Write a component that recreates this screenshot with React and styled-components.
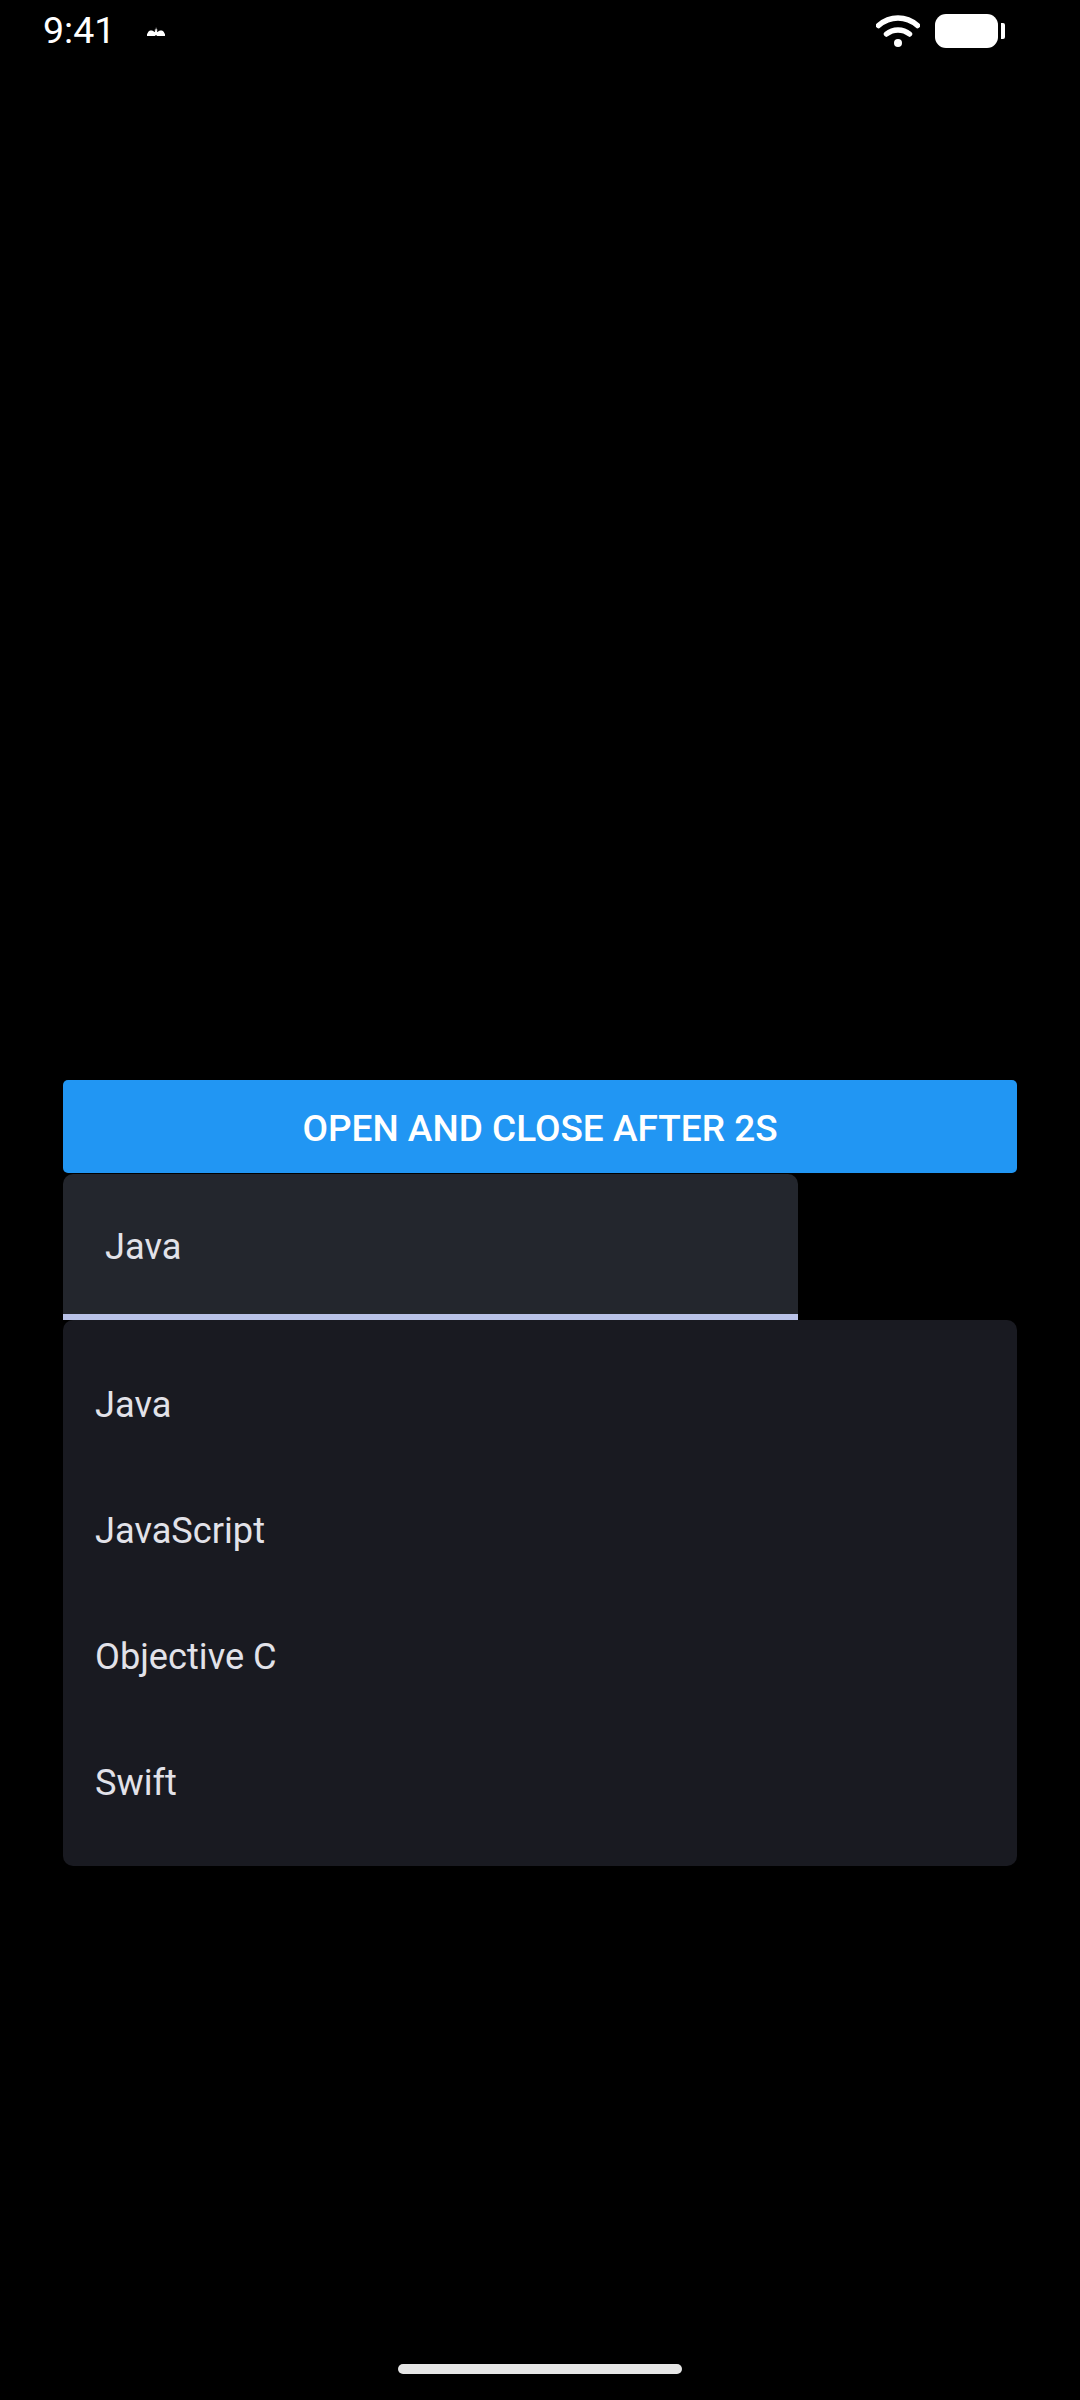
import React from "react";
import styled, { createGlobalStyle } from "styled-components";

const GlobalStyle = createGlobalStyle`
  html, body {
    margin: 0;
    padding: 0;
    background: #000;
  }
  body {
    font-family: Roboto, "Liberation Sans", sans-serif;
  }
`;

const languages = ["Java", "JavaScript", "Objective C", "Swift"];

const App = () => {
  return (
    <>
      <GlobalStyle />
      <Screen>
        <StatusBar>
          <Clock>9:41</Clock>
          <NotifyIcon viewBox="0 0 18 9">
            <path d="M0 9V7.2L1.2 5C2.4 3.4 4.6 3.2 6 4L7.8 5 8.4 3.4 7.2 3 8.7 2.4 9 0 9.6 2.4 11 3 9.7 3.4 10.2 5 12 4C13.6 3.2 15.6 3.4 16.8 5L18 7.2V9H10.2L9 7.9 7.8 9Z" fill="#fff" />
          </NotifyIcon>
          <StatusRight>
            <WifiIcon viewBox="0 0 44 32">
              <path d="M2.5 10.5C14 .5 30 .5 41.5 10.5" />
              <path d="M10.5 19C17 13.6 27 13.6 33.5 19" />
              <circle cx="22" cy="28" r="4" />
            </WifiIcon>
            <Battery />
          </StatusRight>
        </StatusBar>
        <Content>
          <OpenButton>Open and close after 2s</OpenButton>
          <Field>Java</Field>
          <Menu>
            {languages.map((name) => (
              <MenuItem key={name}>{name}</MenuItem>
            ))}
          </Menu>
        </Content>
        <HomeBar />
      </Screen>
    </>
  );
};

const Screen = styled.div`
  width: 1080px;
  height: 2400px;
  background: #000;
  display: flex;
  flex-direction: column;
  overflow: hidden;
`;

const StatusBar = styled.div`
  height: 60px;
  flex: none;
  display: flex;
  align-items: center;
  padding: 0 75px 0 43px;
`;

const Clock = styled.div`
  font-size: 37.5px;
  line-height: 60px;
  color: #fff;
`;

const NotifyIcon = styled.svg`
  width: 18px;
  height: 9px;
  margin: 3px 0 0 32px;
`;

const StatusRight = styled.div`
  margin: 2px 0 0 auto;
  display: flex;
  align-items: center;
  gap: 15px;
`;

const WifiIcon = styled.svg`
  width: 44px;
  height: 32px;
  fill: #fff;
  path {
    fill: none;
    stroke: #fff;
    stroke-width: 5.5;
    stroke-linecap: round;
  }
`;

const Battery = styled.div`
  position: relative;
  width: 63px;
  height: 34px;
  border-radius: 11px;
  background: #fff;
  margin-right: 7px;
  &::after {
    content: "";
    position: absolute;
    left: 66px;
    top: 9px;
    width: 4px;
    height: 16px;
    border-radius: 0 2px 2px 0;
    background: #fff;
  }
`;

const Content = styled.div`
  padding: 1020px 63px 0;
  display: flex;
  flex-direction: column;
`;

const OpenButton = styled.button`
  height: 93px;
  border: 0;
  padding: 3px 0 0;
  border-radius: 5px;
  background: #2196f3;
  color: #fff;
  font-family: Roboto, "Liberation Sans", sans-serif;
  font-size: 37px;
  font-weight: 500;
  text-transform: uppercase;
`;

const Field = styled.div`
  width: 735px;
  height: 146px;
  margin-top: 1px;
  padding: 4px 0 0 42px;
  box-sizing: border-box;
  display: flex;
  align-items: center;
  background: #23262d;
  border-bottom: 6px solid #b9c2e8;
  border-radius: 10px 10px 0 0;
  color: #e2e2e9;
  font-size: 36.2px;
`;

const Menu = styled.div`
  padding: 21px 0;
  background: #191a21;
  border-radius: 10px;
`;

const MenuItem = styled.div`
  height: 126px;
  padding-left: 32px;
  box-sizing: border-box;
  display: flex;
  align-items: center;
  color: #e2e2e9;
  font-size: 36.2px;
`;

const HomeBar = styled.div`
  width: 284px;
  height: 10px;
  margin: auto auto 26px;
  border-radius: 5px;
  background: #e6e6e6;
`;

export default App;
